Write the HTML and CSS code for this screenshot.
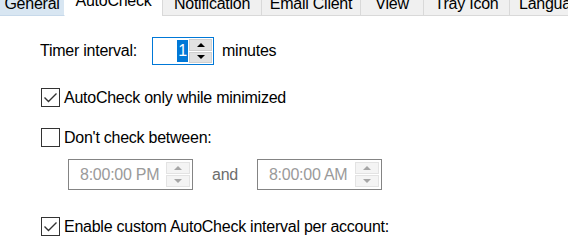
FILE: index.html
```html
<!DOCTYPE html>
<html>

<head>
    <meta http-equiv="Content-Type" content="text/html; charset=utf-8" />
    <title>Options</title>
    <link rel="stylesheet" href="styles.css">
</head>

<body>
    <div class="tabs">
        <div class="tab hover t_general"><span>General</span></div>
        <div class="tab active t_auto"><span>AutoCheck</span></div>
        <div class="tab t_notify"><span>Notification</span></div>
        <div class="tab t_mail"><span>Email Client</span></div>
        <div class="tab t_view"><span>View</span></div>
        <div class="tab t_tray"><span>Tray Icon</span></div>
        <div class="tab t_lang"><span>Language</span></div>
    </div>

    <div class="page">
        <div class="timer">
            <span class="timer_label">Timer interval:</span>
            <div class="spin">
                <div class="spin_text"><span class="sel">1</span></div>
                <div class="spin_btns">
                    <span class="btn"><i class="arrow_up"></i></span>
                    <span class="btn"><i class="arrow_down"></i></span>
                </div>
            </div>
            <span class="unit">minutes</span>
        </div>

        <div class="check row_min">
            <span class="box">
                <svg width="17" height="17" viewBox="0 0 17 17"><polyline points="2.5,8.5 6.5,12.5 14.5,4.5" fill="none" stroke="#333" stroke-width="1.4" /></svg>
            </span>
            <span class="check_text">AutoCheck only while minimized</span>
        </div>

        <div class="check row_between">
            <span class="box"></span>
            <span class="check_text">Don't check between:</span>
        </div>

        <div class="times">
            <div class="picker">
                <span class="picker_text">8:00:00 PM</span>
                <div class="picker_btns">
                    <span class="pbtn"><i class="arrow_up"></i></span>
                    <span class="pbtn"><i class="arrow_down"></i></span>
                </div>
            </div>
            <span class="and">and</span>
            <div class="picker">
                <span class="picker_text">8:00:00 AM</span>
                <div class="picker_btns">
                    <span class="pbtn"><i class="arrow_up"></i></span>
                    <span class="pbtn"><i class="arrow_down"></i></span>
                </div>
            </div>
        </div>

        <div class="check row_custom">
            <span class="box">
                <svg width="17" height="17" viewBox="0 0 17 17"><polyline points="2.5,8.5 6.5,12.5 14.5,4.5" fill="none" stroke="#333" stroke-width="1.4" /></svg>
            </span>
            <span class="check_text">Enable custom AutoCheck interval per account:</span>
        </div>
    </div>
</body>

</html>
```

FILE: styles.css
```css
* {
    margin: 0;
    padding: 0;
}

body {
    background: #fff;
    color: #000;
    font: 16px "Liberation Sans", Arial, sans-serif;
    letter-spacing: -0.25px;
    width: 568px;
    height: 241px;
    overflow: hidden;
}

/* tab strip */
.tabs {
    display: flex;
    height: 16px;
    white-space: nowrap;
}

.tab {
    flex: none;
    height: 15px;
    overflow: hidden;
    text-align: center;
    background: #f0f0f0;
    border-right: 1px solid #d9d9d9;
    border-bottom: 1px solid #d9d9d9;
}

.tab span {
    display: block;
    line-height: 20px;
    margin-top: -6px;
}

.tab.hover {
    background: #d8e6f2;
    border-right: 1px solid #fff;
    border-bottom: 1px solid #c7d9ea;
}

.tab.active {
    height: 16px;
    background: #fff;
    border-bottom: none;
    border-left: none;
}

.tab.active span {
    margin-top: -9px;
}

.t_general { width: 64px; }
.t_auto { width: 97px; }
.t_notify { width: 98px; }
.t_mail { width: 98px; }
.t_view { width: 62px; }
.t_tray { width: 85px; }
.t_lang { width: 80px; text-align: left; padding-left: 9px; }

/* page */
.page {
    padding-left: 40px;
}

.timer {
    display: flex;
    align-items: center;
    height: 28px;
    margin-top: 21px;
}

.timer_label {
    width: 112px;
}

.spin {
    display: flex;
    width: 60px;
    height: 26px;
    border: 1px solid #0078d7;
    background: #fff;
}

.spin_text {
    flex: 1;
    display: flex;
    align-items: center;
    justify-content: flex-end;
    padding-right: 1px;
}

.sel {
    background: #0078d7;
    color: #fff;
    line-height: 22px;
    padding: 0 1px;
}

.spin_btns {
    display: flex;
    flex-direction: column;
    gap: 1px;
    width: 23px;
    padding: 1px 1px 1px 0;
}

.btn {
    flex: 1;
    display: flex;
    align-items: center;
    justify-content: center;
    background: #e1e1e1;
    border: 1px solid #cfcfcf;
}

.arrow_up,
.arrow_down {
    display: block;
    width: 0;
    height: 0;
    border-left: 4px solid transparent;
    border-right: 4px solid transparent;
}

.arrow_up {
    border-bottom: 4px solid #000;
}

.arrow_down {
    border-top: 4px solid #000;
}

.unit {
    margin-left: 8px;
}

/* check boxes */
.check {
    display: flex;
    align-items: center;
    gap: 4px;
    margin-left: 1px;
    height: 19px;
}

.box {
    display: block;
    width: 17px;
    height: 17px;
    border: 1px solid #333;
    background: #fff;
}

.box svg {
    display: block;
}

.row_min {
    margin-top: 23px;
}

.row_between {
    margin-top: 21px;
}

.row_custom {
    margin-top: 27px;
}

/* time pickers */
.times {
    display: flex;
    align-items: center;
    margin: 12px 0 0 28px;
}

.picker {
    display: flex;
    align-items: center;
    width: 123px;
    height: 29px;
    border: 1px solid #848484;
    background: #fff;
}

.picker_text {
    flex: 1;
    padding-left: 11px;
    color: #9a9a9a;
}

.picker_btns {
    display: flex;
    flex-direction: column;
    gap: 1px;
    width: 24px;
    height: 25px;
    margin-right: 2px;
}

.pbtn {
    flex: 1;
    display: flex;
    align-items: center;
    justify-content: center;
    background: #f4f4f4;
    border: 1px solid #e3e3e3;
}

.pbtn .arrow_up {
    border-bottom-color: #a6a6a6;
}

.pbtn .arrow_down {
    border-top-color: #a6a6a6;
}

.and {
    margin: 0 19px 0 19px;
    color: #6d6d6d;
}
```
